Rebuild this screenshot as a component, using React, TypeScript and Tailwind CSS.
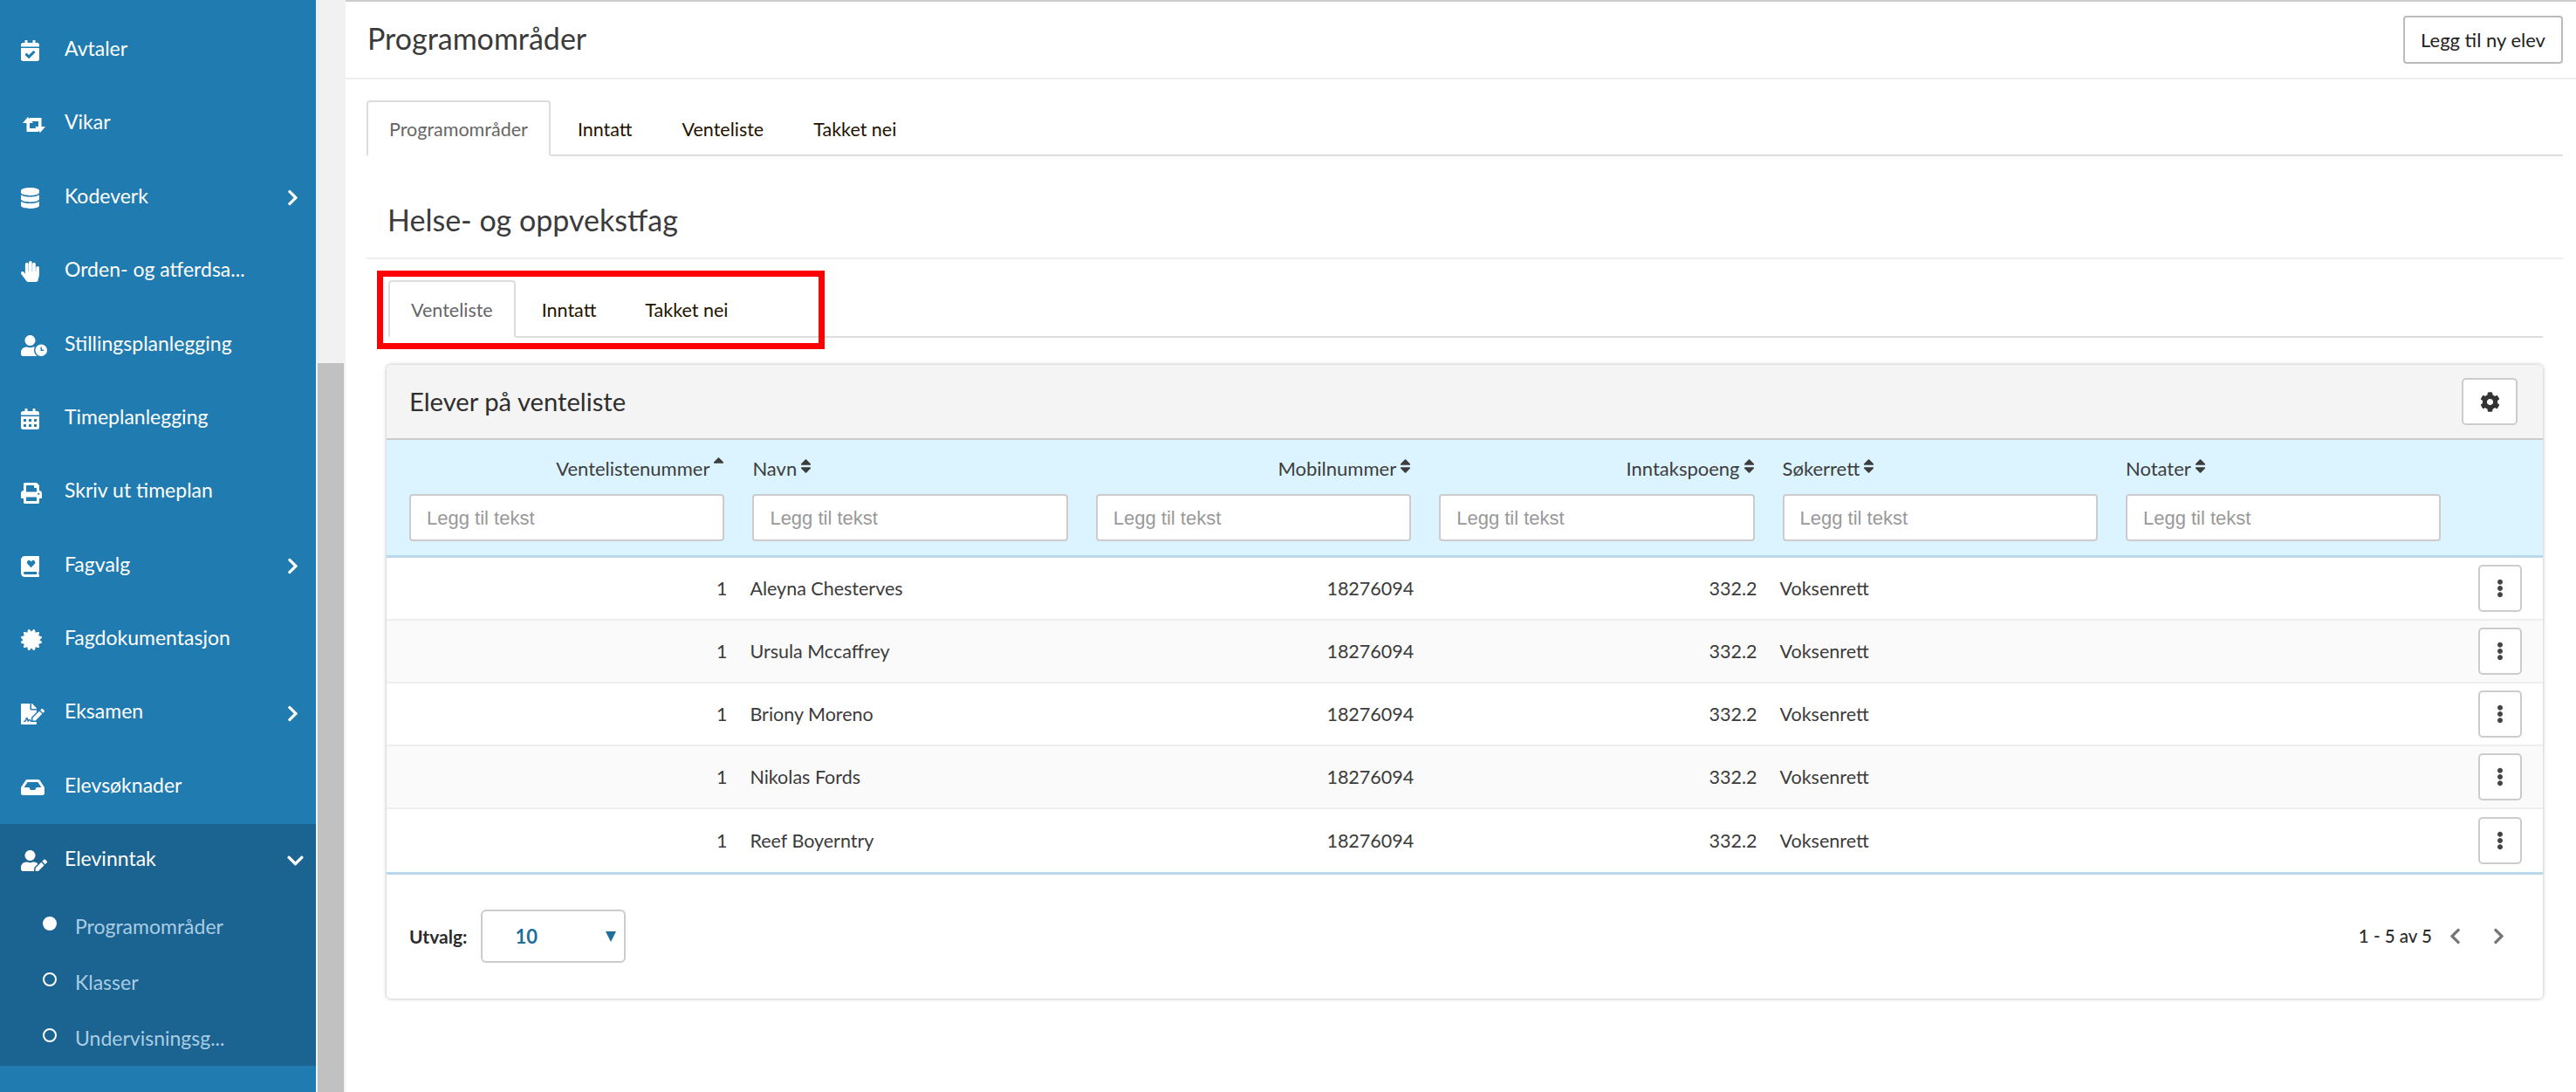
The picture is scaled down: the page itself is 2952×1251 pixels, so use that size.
// App.tsx
import React from 'react';
import {
  FaCalendarCheck, FaDatabase, FaHandPaper, FaUserClock, FaCalendarAlt, FaPrint,
  FaCertificate, FaFileSignature, FaInbox, FaUserEdit, FaChevronRight, FaChevronDown, FaChevronLeft,
  FaCog, FaEllipsisV, FaSort, FaSortUp,
} from 'react-icons/fa';

const BookHeart: React.FC<{ className?: string }> = ({ className }) => (
  <svg viewBox="0 0 448 512" className={className} fill="currentColor">
    <path d="M448 360V24c0-13.3-10.7-24-24-24H96C43 0 0 43 0 96v320c0 53 43 96 96 96h328c13.3 0 24-10.7 24-24v-16c0-7.5-3.5-14.3-8.9-18.7-4.2-15.4-4.2-59.3 0-74.7 5.4-4.3 8.9-11.1 8.9-18.6zM384 448H96c-17.7 0-32-14.3-32-32s14.4-32 32-32h288z" />
    <path fill="#207bb1" d="M248 280l-88-88a50 50 0 0 1 72-70l16 16 16-16a50 50 0 0 1 72 70z" />
  </svg>
);

const SwapIcon: React.FC<{ className?: string }> = ({ className }) => (
  <svg viewBox="0 0 26 18" className={className} fill="currentColor">
    <path d="M0 7l6-7 6 7H8v6h10v4H4.500V7z" />
    <path d="M26 11l-6 7-6-7h4V5H8V1h13.500v10z" />
  </svg>
);

const menuItems = [
  { icon: FaCalendarCheck, size: 'w-[21px] h-[24px]', label: 'Avtaler' },
  { icon: SwapIcon, size: 'w-[26px] h-[18px] ml-[2px]', label: 'Vikar' },
  { icon: FaDatabase, size: 'w-[21px] h-[24px]', label: 'Kodeverk', arrow: true },
  { icon: FaHandPaper, size: 'w-[21px] h-[24px]', label: 'Orden- og atferdsa...' },
  { icon: FaUserClock, size: 'w-[30px] h-[24px]', label: 'Stillingsplanlegging' },
  { icon: FaCalendarAlt, size: 'w-[21px] h-[24px]', label: 'Timeplanlegging' },
  { icon: FaPrint, size: 'w-[24px] h-[24px]', label: 'Skriv ut timeplan' },
  { icon: BookHeart, size: 'w-[21px] h-[24px]', label: 'Fagvalg', arrow: true },
  { icon: FaCertificate, size: 'w-[24px] h-[24px]', label: 'Fagdokumentasjon' },
  { icon: FaFileSignature, size: 'w-[27px] h-[24px]', label: 'Eksamen', arrow: true },
  { icon: FaInbox, size: 'w-[27px] h-[24px]', label: 'Elevsøknader' },
];

const subItems = [
  { label: 'Programområder', active: true },
  { label: 'Klasser', active: false },
  { label: 'Undervisningsg...', active: false },
];

const Sidebar: React.FC = () => (
  <div className="w-[362px] shrink-0 bg-[#207bb1] pt-[16px] text-white text-[23px]">
    {menuItems.map((item) => (
      <div key={item.label} className="h-[84.4px] flex items-center pl-[24px]">
        <span className="w-[50px] shrink-0 flex"><item.icon className={item.size} /></span>
        <span className="flex-1 -mt-[6px]">{item.label}</span>
        {item.arrow && <FaChevronRight className="w-[13px] h-[21px] mr-[20px]" />}
      </div>
    ))}
    <div className="bg-[#1b6390] h-[277px]">
      <div className="h-[84px] flex items-center pl-[24px]">
        <span className="w-[50px] shrink-0 flex"><FaUserEdit className="w-[30px] h-[24px]" /></span>
        <span className="flex-1 -mt-[6px]">Elevinntak</span>
        <FaChevronDown className="w-[19px] h-[22px] mr-[14px]" />
      </div>
      <div className="pt-[2px]">
        {subItems.map((item) => (
          <div key={item.label} className="h-[64px] flex items-center pl-[49px]">
            <span className={`w-[16px] h-[16px] rounded-full border-2 border-white -mt-[8px] ${item.active ? 'bg-white' : ''}`} />
            <span className="ml-[21px] -mt-[3px] text-[#a9cde4]">{item.label}</span>
          </div>
        ))}
      </div>
    </div>
  </div>
);

const Tab: React.FC<{ label: string; active?: boolean }> = ({ label, active }) => (
  <div
    className={`px-[24px] flex items-center rounded-t-[4px] -mb-[2px] border-2 pt-[2px] text-[21.5px] ${
      active ? 'border-[#ddd] border-b-white bg-white text-[#666]' : 'border-transparent text-[#1f1300]'
    }`}
  >
    {label}
  </div>
);

const columns = [
  { label: 'Ventelistenummer', right: true, sorted: true },
  { label: 'Navn' },
  { label: 'Mobilnummer', right: true },
  { label: 'Inntakspoeng', right: true },
  { label: 'Søkerrett' },
  { label: 'Notater' },
];

const students = ['Aleyna Chesterves', 'Ursula Mccaffrey', 'Briony Moreno', 'Nikolas Fords', 'Reef Boyerntry'];

export default function App() {
  return (
    <div className="flex h-[1251px] overflow-hidden bg-white font-['Lato',sans-serif] text-[#3b3b3b]">
      <Sidebar />
      <div className="w-[34px] shrink-0 bg-[#f1f1f1] pt-[416px] pl-[2px] pr-[2px]">
        <div className="h-full bg-[#c1c1c1]" />
      </div>
      <div className="flex-1 min-w-0 border-t-2 border-[#ccc]">
        <div className="h-[89px] border-b-2 border-[#eee] flex items-center justify-between pl-[25px] pr-[15px]">
          <h1 className="text-[34px] font-normal -mt-[4px]">Programområder</h1>
          <button className="h-[55px] w-[183px] border-2 border-[#bbb] rounded-[4px] text-[22px] text-[#222]">Legg til ny elev</button>
        </div>

        <div className="pl-[24px] pr-[15px] pt-[24px]">
          <div className="h-[64px] flex gap-[5px] border-b-2 border-[#ddd]">
            <Tab label="Programområder" active />
            <Tab label="Inntatt" />
            <Tab label="Venteliste" />
            <Tab label="Takket nei" />
          </div>
          <div className="h-[118px] border-b-2 border-[#eee] pl-[24px] pt-[51px]">
            <h2 className="text-[34px] leading-[44px] font-normal">Helse- og oppvekstfag</h2>
          </div>

          <div className="pl-[25px] pr-[23px]">
            <div className="relative mt-[24px] h-[66px] flex gap-[4px] border-b-2 border-[#ddd]">
              <Tab label="Venteliste" active />
              <Tab label="Inntatt" />
              <Tab label="Takket nei" />
              <div className="absolute left-[-13px] top-[-11px] w-[513px] h-[90px] border-[7px] border-[#ff0000]" />
            </div>

            <div className="mt-[31px] -ml-[2px] h-[726px] rounded-[5px] bg-white shadow-[0_0_4px_rgba(0,0,0,0.3)] overflow-hidden">
              <div className="h-[86px] bg-[#f4f4f4] border-b-2 border-[#ccc] flex items-center justify-between pl-[26px] pr-[29px]">
                <span className="text-[29.2px] text-[#2f2f2f]">Elever på venteliste</span>
                <button className="w-[64px] h-[54px] bg-white border-2 border-[#ccc] rounded-[5px] flex items-center justify-center">
                  <FaCog className="w-[23px] h-[23px] text-[#333]" />
                </button>
              </div>

              <div className="h-[135px] bg-[#dcf4ff] border-b-[3px] border-[#b8d8ec] pl-[26px] grid grid-cols-[repeat(6,361.4px)_1fr] gap-x-[32px]">
                {columns.map((col) => (
                  <div key={col.label} className="pt-[16px]">
                    <div className={`h-[46px] flex items-start gap-[4px] text-[22px] text-[#3d3d3d] ${col.right ? 'justify-end' : ''}`}>
                      {col.label}
                      {col.sorted ? <FaSortUp className="w-[13px] h-[20px] mt-[2px]" /> : <FaSort className="w-[13px] h-[20px] mt-[4px]" />}
                    </div>
                    <input
                      placeholder="Legg til tekst"
                      className="w-full h-[54px] bg-white border-2 border-[#ccc] rounded-[4px] px-[18px] pt-[2px] font-['Liberation_Sans',sans-serif] text-[22px] placeholder:text-[#999]"
                    />
                  </div>
                ))}
              </div>

              {students.map((name, i) => (
                <div
                  key={name}
                  className={`h-[72px] pl-[23px] grid grid-cols-[repeat(6,367.4px)_1fr] gap-x-[26px] items-center text-[21.5px] ${
                    i % 2 === 1 ? 'bg-[#fafafa]' : 'bg-white'
                  } ${i < 4 ? 'border-b-2 border-[#eee]' : ''}`}
                >
                  <span className="text-right">1</span>
                  <span>{name}</span>
                  <span className="text-right">18276094</span>
                  <span className="text-right">332.2</span>
                  <span>Voksenrett</span>
                  <span />
                  <div className="flex justify-end pr-[24px]">
                    <button className="w-[50px] h-[54px] bg-white border-2 border-[#ccc] rounded-[5px] flex items-center justify-center">
                      <FaEllipsisV className="w-[8px] h-[24px] text-[#444]" />
                    </button>
                  </div>
                </div>
              ))}

              <div className="h-[145px] border-t-[3px] border-[#b8d8ec] flex items-start justify-between pl-[26px] pr-[44px] pt-[40px]">
                <div className="flex items-center gap-[16px]">
                  <span className="text-[21px] font-bold text-[#2b2b2b]">Utvalg:</span>
                  <div className="w-[166px] h-[61px] border-2 border-[#ccc] rounded-[6px] flex items-center justify-between pl-[37px] pr-[9px]">
                    <span className="text-[22px] font-bold text-[#1f6f9b]">10</span>
                    <span className="w-0 h-0 border-l-[6px] border-r-[6px] border-t-[12px] border-l-transparent border-r-transparent border-t-[#1f6f9b]" />
                  </div>
                </div>
                <div className="flex items-center h-[61px] text-[20.5px] font-medium text-[#2b2b2b]">
                  <span>1 - 5 av 5</span>
                  <FaChevronLeft className="ml-[20px] w-[13px] h-[21px] text-[#757575]" />
                  <FaChevronRight className="ml-[37px] w-[13px] h-[21px] text-[#757575]" />
                </div>
              </div>
            </div>
          </div>
        </div>
      </div>
    </div>
  );
}
